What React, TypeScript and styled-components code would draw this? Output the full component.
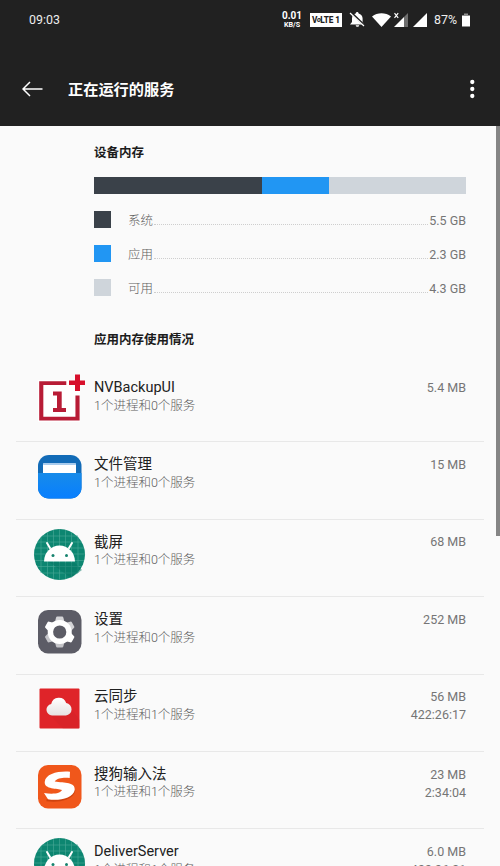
import React from 'react';
import styled, { createGlobalStyle } from 'styled-components';

const GlobalStyle = createGlobalStyle`
  * { box-sizing: border-box; }
  html, body { margin: 0; padding: 0; background: #fafafa; overflow: hidden; }
  body { font-family: Roboto, "Noto Sans CJK SC", sans-serif; }
  svg { display: block; }
`;

const Screen = styled.div`
  width: 500px;
  height: 866px;
  overflow: hidden;
  display: flex;
  flex-direction: column;
  background: #fafafa;
`;

const Header = styled.header`
  flex: none;
  height: 126px;
  background: #212121;
  color: #fff;
`;

const StatusBar = styled.div`
  height: 40px;
  padding: 0 30px 0 29px;
  display: flex;
  align-items: center;
  justify-content: space-between;
`;

const Clock = styled.span`
  font-size: 12.4px;
  line-height: 16px;
  color: #eee;
`;

const StatusIcons = styled.div`
  display: flex;
  align-items: center;
`;

const NetSpeed = styled.div`
  width: 20px;
  margin-right: 8px;
  display: flex;
  flex-direction: column;
  align-items: center;
  font-weight: 700;
  font-size: 10px;
  line-height: 10px;
`;

const SpeedUnit = styled.span`
  font-size: 7.2px;
  line-height: 8px;
`;

const VolteBadge = styled.span`
  display: flex;
  align-items: center;
  justify-content: center;
  width: 32px;
  height: 14px;
  margin-right: 7px;
  background: #fff;
  color: #212121;
  font-size: 8.2px;
  font-weight: 800;
  line-height: 14px;
  letter-spacing: -0.1px;
  white-space: pre;
`;

const SlantedO = styled.span`
  font-size: 7px;
  font-style: italic;
  margin: 0 -0.4px;
`;

const Battery = styled.span`
  width: 25px;
  margin-left: 6px;
  font-size: 12.4px;
  line-height: 16px;
  color: #eee;
`;

const TitleBar = styled.div`
  height: 86px;
  padding: 12px 25px 0 22px;
  display: flex;
  align-items: flex-start;
`;

const ToolIcon = styled.div<{ $top: number }>`
  flex: none;
  margin-top: ${(p) => p.$top}px;
`;

const PageTitle = styled.h1`
  flex: 1;
  margin: 27px 0 0 25px;
  font-size: 15.2px;
  line-height: 22px;
  font-weight: 700;
`;

const Body = styled.div`
  flex: 1;
  min-height: 0;
  display: flex;
`;

const Content = styled.main`
  flex: 1;
  min-width: 0;
  overflow: hidden;
`;

const ScrollTrack = styled.div`
  flex: none;
  width: 4px;
`;

const ScrollThumb = styled.div`
  height: 410px;
  background: #858585;
`;

const Memory = styled.section`
  height: 239px;
  padding: 18px 30px 0 94px;
`;

const SectionTitle = styled.h2`
  margin: 0;
  font-size: 12.5px;
  line-height: 18px;
  font-weight: 700;
  color: #1c1c1c;
`;

const UsageBar = styled.div`
  display: flex;
  height: 17px;
  margin: 15px 0 17px;
`;

const Segment = styled.div<{ $grow: number; $color: string }>`
  flex: ${(p) => p.$grow} 0 0;
  background: ${(p) => p.$color};
`;

const Legend = styled.div`
  display: flex;
  flex-direction: column;
  gap: 17px;
  margin-bottom: 35px;
`;

const LegendRow = styled.div`
  display: flex;
  height: 17px;
  font-size: 12.5px;
  line-height: 18px;
  color: #757575;
`;

const Swatch = styled.span<{ $color: string }>`
  width: 17px;
  height: 17px;
  margin-right: 17px;
  background: ${(p) => p.$color};
`;

const LegendLabel = styled.span`
  padding-top: 1px;
  font-weight: 300;
  color: #606060;
`;

const Leader = styled.span`
  flex: 1;
  height: 14px;
  margin: 0 1px;
  border-bottom: 1px dotted #cecece;
`;

const LegendValue = styled.span`
  padding-top: 1px;
`;

const AppRow = styled.div`
  height: 77.4px;
  margin: 0 12px 0 16px;
  padding: 0 18px 0 16px;
  display: flex;
  border-bottom: 1px solid #e8e8e8;
`;

const IconCell = styled.div`
  flex: none;
  width: 56px;
  height: 56px;
  margin: 6.8px 6px 0 0;
`;

const AppText = styled.div`
  flex: 1;
  padding-top: 12.8px;
`;

const AppName = styled.div`
  font-size: 14.5px;
  line-height: 19px;
  color: #212121;
`;

const AppDetail = styled.div`
  margin-top: -0.3px;
  font-size: 12.5px;
  line-height: 18px;
  font-weight: 300;
  color: #5c5c5c;
`;

const Stats = styled.div`
  padding-top: 13.6px;
  text-align: right;
  font-size: 12.5px;
  line-height: 18px;
  color: #757575;
`;

type IconName = 'oneplus' | 'files' | 'android' | 'settings' | 'cloud' | 'sogou';

const OnePlusIcon = () => (
  <svg width="56" height="56" viewBox="0 0 56 56">
    <path d="M6 8h42v42H6z" fill="#fff" />
    <path d="M34.500 9H7v40h41V23.500h-4.200V45H11.200V13h23.300z" fill="#b81c36" transform="translate(.3 .3) scale(.985 .985)" />
    <path d="M43 2.500h5v6h5v4.600h-5v5.900h-5v-5.900h-6V8.500h6z" fill="#d70f2b" />
    <path d="M21 19.500h8.700V36H34v4H21v-4h4V23.500h-4z" fill="#b81c36" />
  </svg>
);

const FilesIcon = () => (
  <svg width="56" height="56" viewBox="0 0 56 56">
    <defs>
      <linearGradient id="files" x2="0" y2="1">
        <stop stopColor="#178be9" /><stop offset="1" stopColor="#087fff" />
      </linearGradient>
    </defs>
    <rect x="6" y="6" width="43.500" height="43.500" rx="11" fill="#126bb7" />
    <rect x="11" y="14" width="33" height="16" rx="2" fill="#fff" />
    <rect x="11" y="14" width="33" height="2" rx="1" fill="#a7cbed" />
    <path d="M6 24h43.500v14.500a11 11 0 0 1-11 11H17a11 11 0 0 1-11-11z" fill="url(#files)" />
  </svg>
);

const AndroidIcon = () => (
  <svg width="56" height="56" viewBox="0 0 56 56">
    <circle cx="27.500" cy="27.500" r="25.500" fill="#0d8671" />
    <path d="M9 10v36M15.500 5v45M21.500 3v49M27.500 2v51M33.500 3v49M39.500 5v45M46 10v36M10 9h36M5 15h45M3 21h49M2 27h51M3 33.500h49M5 39.500h45M10 46h36" stroke="#4caa99" strokeWidth=".6" />
    <path d="m43 36 7 7-11 8-22-16z" fill="#067664" opacity=".5" />
    <path d="m18 21-3-5M37 21l3-5" stroke="#fff" strokeWidth="2" strokeLinecap="round" />
    <path d="M12 34.500a15.500 16 0 0 1 31 0z" fill="#fff" />
    <circle cx="21" cy="28.500" r="1.500" fill="#17836f" />
    <circle cx="34.500" cy="28.500" r="1.500" fill="#17836f" />
  </svg>
);

const gearTeeth = [
  { angle: 0, fill: '#d4d4d7' },
  { angle: 180, fill: '#c4c4c8' },
  { angle: 60, fill: '#d4d4d7' },
  { angle: 240, fill: '#c4c4c8' },
  { angle: 120, fill: '#fff' },
  { angle: 300, fill: '#fff' },
];

const SettingsIcon = () => (
  <svg width="56" height="56" viewBox="0 0 56 56">
    <rect x="6" y="6" width="43.500" height="43.500" rx="10" fill="#5c5c66" />
    {gearTeeth.map((t) => (
      <path
        key={t.angle}
        d="M20 20.500 23.200 17l.8-3.200q.3-1.200 1.300-1.200h4.800q1 0 1.300 1.200l.8 3.200 3.200 3.500z"
        fill={t.fill}
        transform={`rotate(${t.angle} 27.700 28)`}
      />
    ))}
    <circle cx="27.700" cy="28" r="12" fill="#fff" />
    <circle cx="27.700" cy="28" r="6.600" fill="#5c5c66" />
  </svg>
);

const CloudIcon = () => (
  <svg width="56" height="56" viewBox="0 0 56 56">
    <defs>
      <linearGradient id="cloud" x2="0" y2="1">
        <stop stopColor="#fff" /><stop offset="1" stopColor="#e6e2e2" />
      </linearGradient>
    </defs>
    <rect x="7.500" y="7.500" width="40" height="40" rx="1" fill="#df2429" />
    <path d="m18 34 13 13.500h16.500V39L38 26z" fill="#ce2028" opacity=".3" />
    <path d="M20 34.500a5.800 5.800 0 0 1-.8-11.500A7.800 7.800 0 0 1 34.200 22a6.300 6.300 0 0 1-.3 12.500z" fill="url(#cloud)" />
  </svg>
);

const SogouIcon = () => (
  <svg width="56" height="56" viewBox="0 0 56 56">
    <rect x="6" y="6" width="43.500" height="43.500" rx="10" fill="#f0571b" />
    <path d="M42.500 31c-1 8-13 12-28 10.200" fill="none" stroke="#cf430f" strokeWidth="2" />
    <path d="M38 12.800C27 11.800 13.500 14.500 12.700 23c-.5 7.500 13 6.300 17.300 8-1.500 3.500-9 4.500-18 3l4 6.200c10 2 25.500-.8 26.700-9.200 1-8-10-7-20-8.500 2.500-3.500 8.500-4.200 15-3.600z" fill="#fff" />
  </svg>
);

const icons: Record<IconName, React.FC> = {
  oneplus: OnePlusIcon,
  files: FilesIcon,
  android: AndroidIcon,
  settings: SettingsIcon,
  cloud: CloudIcon,
  sogou: SogouIcon,
};

const SignalIcons = () => (
  <svg width="79" height="20" viewBox="0 0 79 20">
    <g fill="#fff">
      <path d="M1 14.500 3 12V8.500C3 5.500 4.700 4 6.800 3.500c0-2 2.800-2 2.800 0 2.300.5 4 2.500 4 5V12l1.800 2.500zM6.700 15.200h3.500c-.2 2-3.300 2-3.500 0z" />
      <path d="m2 2.500 13.500 13" stroke="#212121" strokeWidth="2.400" />
      <path d="m1 3 14 13" stroke="#fff" strokeWidth="1.200" />
      <path d="M23 6.500c5.500-4.300 13.500-4.300 19 0L32.500 17z" />
      <path d="M45 17 55 7v10z" />
      <path d="M55 7 59 3v14h-4z" opacity=".35" />
      <path d="m45.500 3.200 3.700 4.600m0-4.600-3.700 4.600" stroke="#fff" strokeWidth="1.200" />
      <path d="M64 17 78 3v14z" />
    </g>
  </svg>
);

const BatteryIcon = () => (
  <svg width="8" height="15" viewBox="0 0 8 15">
    <path d="M2 .5h4V2h2v2H0V2h2z" fill="#8d8d8d" />
    <path d="M0 3h8v10.500H0z" fill="#fff" />
  </svg>
);

const BackArrow = () => (
  <svg width="21" height="16" viewBox="0 0 21 16" fill="none" stroke="#fff" strokeWidth="1.500">
    <path d="M8 1 1 8l7 7M1 8h19.500" />
  </svg>
);

const MoreDots = () => (
  <svg width="6" height="20" viewBox="0 0 6 20" fill="#fff">
    <circle cx="3.300" cy="3" r="2.150" />
    <circle cx="3.300" cy="10" r="2.150" />
    <circle cx="3.300" cy="17" r="2.150" />
  </svg>
);

const BatteryBox = styled.div`
  margin-left: 3px;
`;

const memory = [
  { label: '系统', value: '5.5 GB', color: '#3a4149', share: 168 },
  { label: '应用', value: '2.3 GB', color: '#2196f3', share: 66.5 },
  { label: '可用', value: '4.3 GB', color: '#cfd5db', share: 137.5 },
];

const apps: { name: string; icon: IconName; detail: string; size: string; time?: string }[] = [
  { name: 'NVBackupUI', icon: 'oneplus', detail: '1个进程和0个服务', size: '5.4 MB' },
  { name: '文件管理', icon: 'files', detail: '1个进程和0个服务', size: '15 MB' },
  { name: '截屏', icon: 'android', detail: '1个进程和0个服务', size: '68 MB' },
  { name: '设置', icon: 'settings', detail: '1个进程和0个服务', size: '252 MB' },
  { name: '云同步', icon: 'cloud', detail: '1个进程和1个服务', size: '56 MB', time: '422:26:17' },
  { name: '搜狗输入法', icon: 'sogou', detail: '1个进程和1个服务', size: '23 MB', time: '2:34:04' },
  { name: 'DeliverServer', icon: 'android', detail: '1个进程和1个服务', size: '6.0 MB', time: '422:26:21' },
];

export default function App() {
  return (
    <Screen>
      <GlobalStyle />
      <Header>
        <StatusBar>
          <Clock>09:03</Clock>
          <StatusIcons>
            <NetSpeed>0.01<SpeedUnit>KB/S</SpeedUnit></NetSpeed>
            <VolteBadge>V<SlantedO>o</SlantedO>LTE 1</VolteBadge>
            <SignalIcons />
            <Battery>87%</Battery>
            <BatteryBox><BatteryIcon /></BatteryBox>
          </StatusIcons>
        </StatusBar>
        <TitleBar>
          <ToolIcon $top={29}><BackArrow /></ToolIcon>
          <PageTitle>正在运行的服务</PageTitle>
          <ToolIcon $top={27}><MoreDots /></ToolIcon>
        </TitleBar>
      </Header>
      <Body>
        <Content>
          <Memory>
            <SectionTitle>设备内存</SectionTitle>
            <UsageBar>
              {memory.map((m) => <Segment key={m.label} $grow={m.share} $color={m.color} />)}
            </UsageBar>
            <Legend>
              {memory.map((m) => (
                <LegendRow key={m.label}>
                  <Swatch $color={m.color} />
                  <LegendLabel>{m.label}</LegendLabel>
                  <Leader />
                  <LegendValue>{m.value}</LegendValue>
                </LegendRow>
              ))}
            </Legend>
            <SectionTitle>应用内存使用情况</SectionTitle>
          </Memory>
          {apps.map((app) => {
            const Icon = icons[app.icon];
            return (
              <AppRow key={app.name}>
                <IconCell><Icon /></IconCell>
                <AppText>
                  <AppName>{app.name}</AppName>
                  <AppDetail>{app.detail}</AppDetail>
                </AppText>
                <Stats>
                  <div>{app.size}</div>
                  {app.time && <div>{app.time}</div>}
                </Stats>
              </AppRow>
            );
          })}
        </Content>
        <ScrollTrack><ScrollThumb /></ScrollTrack>
      </Body>
    </Screen>
  );
}
